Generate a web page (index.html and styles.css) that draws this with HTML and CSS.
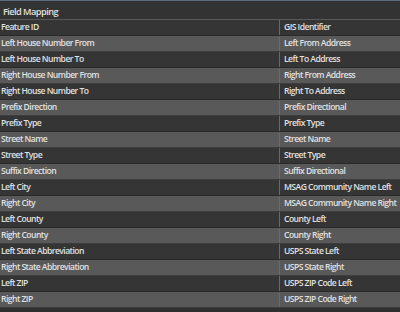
FILE: index.html
```html
<!DOCTYPE html>
<html>
<head>
<meta charset="utf-8">
<link rel="stylesheet" href="styles.css">
</head>
<body>
<div class="panel">
  <div class="title">Field Mapping</div>
  <div class="grid">
    <div class="row"><div class="c1">Feature ID</div><div class="c2">GIS Identifier</div></div>
    <div class="row"><div class="c1">Left House Number From</div><div class="c2">Left From Address</div></div>
    <div class="row"><div class="c1">Left House Number To</div><div class="c2">Left To Address</div></div>
    <div class="row"><div class="c1">Right House Number From</div><div class="c2">Right From Address</div></div>
    <div class="row"><div class="c1">Right House Number To</div><div class="c2">Right To Address</div></div>
    <div class="row"><div class="c1">Prefix Direction</div><div class="c2">Prefix Directional</div></div>
    <div class="row"><div class="c1">Prefix Type</div><div class="c2">Prefix Type</div></div>
    <div class="row"><div class="c1">Street Name</div><div class="c2">Street Name</div></div>
    <div class="row"><div class="c1">Street Type</div><div class="c2">Street Type</div></div>
    <div class="row"><div class="c1">Suffix Direction</div><div class="c2">Suffix Directional</div></div>
    <div class="row"><div class="c1">Left City</div><div class="c2">MSAG Community Name Left</div></div>
    <div class="row"><div class="c1">Right City</div><div class="c2">MSAG Community Name Right</div></div>
    <div class="row"><div class="c1">Left County</div><div class="c2">County Left</div></div>
    <div class="row"><div class="c1">Right County</div><div class="c2">County Right</div></div>
    <div class="row"><div class="c1">Left State Abbreviation</div><div class="c2">USPS State Left</div></div>
    <div class="row"><div class="c1">Right State Abbreviation</div><div class="c2">USPS State Right</div></div>
    <div class="row"><div class="c1">Left ZIP</div><div class="c2">USPS ZIP Code Left</div></div>
    <div class="row"><div class="c1">Right ZIP</div><div class="c2">USPS ZIP Code Right</div></div>
  </div>
</div>
</body>
</html>
```
FILE: styles.css
```css
html, body {
  margin: 0;
  padding: 0;
  background: #2f2f2f;
}
.panel {
  width: 400px;
  height: 312px;
  overflow: hidden;
  background: #2f2f2f;
  border-top: 1px solid #5b6a80;
  font-family: "Open Sans", "Noto Sans", sans-serif;
  font-size: 8.6px;
  font-weight: 600;
  letter-spacing: -0.55px;
  color: #e0e0e0;
  box-sizing: border-box;
}
.title {
  height: 18px;
  line-height: 21px;
  padding-left: 3px;
  border-bottom: 1px solid #5a5a5a;
  background: #333333;
  font-size: 9.2px;
}
.row {
  display: grid;
  grid-template-columns: 279px 1fr;
  height: 15px;
  line-height: 15px;
  border-bottom: 1px solid #2a2a2a;
  background: #353535;
}
.row:nth-child(even) {
  background: #595959;
  border-bottom-color: #3e3e3e;
}
.c1 {
  padding-left: 1px;
  white-space: nowrap;
}
.c2 {
  border-left: 1px solid #6a6a6a;
  padding-left: 4px;
  white-space: nowrap;
}
```
